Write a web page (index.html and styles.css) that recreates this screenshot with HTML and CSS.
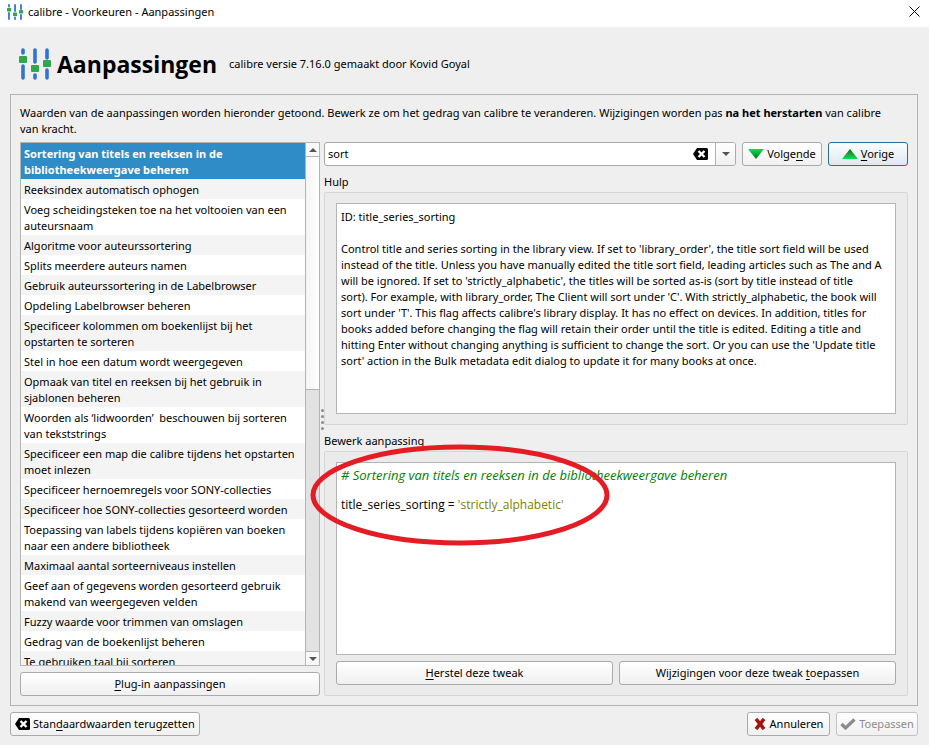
FILE: index.html
```html
<!DOCTYPE html>
<html lang="nl">
<head>
    <meta charset="UTF-8">
    <meta name="viewport" content="width=device-width, initial-scale=1.0">
    <title>calibre - Voorkeuren - Aanpassingen</title>
    <link rel="stylesheet" href="styles.css">
</head>
<body>
    <svg class="defs" width="0" height="0">
        <symbol id="sliders" viewBox="0 0 32 32">
            <path d="M4 2v3M4 18v12M16 2v12M16 27v3M28 2v8M28 22v8" stroke="#3273cd" stroke-width="3.600" stroke-linecap="round"/>
            <rect x="0" y="8" width="8" height="7" rx="1" fill="#2fa84a"/>
            <rect x="12" y="17" width="8" height="7" rx="1" fill="#2fa84a"/>
            <rect x="24" y="12" width="8" height="7" rx="1" fill="#2fa84a"/>
        </symbol>
        <symbol id="clear" viewBox="0 0 15 12">
            <path d="M4 0h9.500a1.500 1.500 0 0 1 1.500 1.500v9a1.500 1.500 0 0 1-1.500 1.500H4L0 6z" fill="#000"/>
            <path d="M5.500 3l6 6M11.500 3l-6 6" stroke="#fff" stroke-width="2.400"/>
        </symbol>
    </svg>

    <div class="titlebar">
        <svg class="titlebar-icon" viewBox="0 0 32 32"><use href="#sliders" width="32" height="32"/></svg>
        <span class="titlebar-text">calibre - Voorkeuren - Aanpassingen</span>
        <button class="close" type="button" aria-label="Sluiten">
            <svg width="11" height="11" viewBox="0 0 11 11"><path d="M.5.500l10 10M10.500.500l-10 10" stroke="#000" fill="none"/></svg>
        </button>
    </div>

    <header class="header">
        <svg class="header-icon" viewBox="0 0 32 32"><use href="#sliders" width="32" height="32"/></svg>
        <h1>Aanpassingen</h1>
        <span>calibre versie 7.16.0 gemaakt door Kovid Goyal</span>
    </header>

    <main class="frame">
        <p class="intro">Waarden van de aanpassingen worden hieronder getoond. Bewerk ze om het gedrag van calibre te veranderen. Wijzigingen worden pas <b>na het herstarten</b> van calibre<br>van kracht.</p>

        <div class="panes">
            <section class="left">
                <div class="list-box">
                    <ul class="list">
                        <li class="selected">Sortering van titels en reeksen in de<br>bibliotheekweergave beheren</li>
                        <li>Reeksindex automatisch ophogen</li>
                        <li>Voeg scheidingsteken toe na het voltooien van een<br>auteursnaam</li>
                        <li>Algoritme voor auteurssortering</li>
                        <li>Splits meerdere auteurs namen</li>
                        <li>Gebruik auteurssortering in de Labelbrowser</li>
                        <li>Opdeling Labelbrowser beheren</li>
                        <li>Specificeer kolommen om boekenlijst bij het<br>opstarten te sorteren</li>
                        <li>Stel in hoe een datum wordt weergegeven</li>
                        <li>Opmaak van titel en reeksen bij het gebruik in<br>sjablonen beheren</li>
                        <li>Woorden als ‘lidwoorden’&nbsp; beschouwen bij sorteren<br>van tekststrings</li>
                        <li>Specificeer een map die calibre tijdens het opstarten<br>moet inlezen</li>
                        <li>Specificeer hernoemregels voor SONY-collecties</li>
                        <li>Specificeer hoe SONY-collecties gesorteerd worden</li>
                        <li>Toepassing van labels tijdens kopiëren van boeken<br>naar een andere bibliotheek</li>
                        <li>Maximaal aantal sorteerniveaus instellen</li>
                        <li>Geef aan of gegevens worden gesorteerd gebruik<br>makend van weergegeven velden</li>
                        <li>Fuzzy waarde voor trimmen van omslagen</li>
                        <li>Gedrag van de boekenlijst beheren</li>
                        <li>Te gebruiken taal bij sorteren</li>
                    </ul>
                    <div class="scrollbar">
                        <button class="scroll-button" type="button" aria-label="Omhoog"><svg width="8" height="4" viewBox="0 0 8 4"><path d="M4 0l4 4H0z" fill="#555"/></svg></button>
                        <div class="thumb"></div>
                        <div class="track"></div>
                        <button class="scroll-button" type="button" aria-label="Omlaag"><svg width="8" height="4" viewBox="0 0 8 4"><path d="M0 0h8L4 4z" fill="#555"/></svg></button>
                    </div>
                </div>
                <button class="button" type="button"><span><u>P</u>lug-in aanpassingen</span></button>
            </section>

            <div class="splitter"><i></i><i></i><i></i><i></i></div>

            <section class="right">
                <form class="search-row">
                    <div class="search">
                        <input type="text" value="sort" aria-label="Zoeken">
                        <button class="search-clear" type="button" aria-label="Wissen"><svg width="15" height="12"><use href="#clear"/></svg></button>
                        <button class="search-drop" type="button" aria-label="Geschiedenis"><svg width="8" height="4" viewBox="0 0 8 4"><path d="M0 0h8L4 4z" fill="#555"/></svg></button>
                    </div>
                    <button class="button next" type="button">
                        <svg width="16" height="10" viewBox="0 0 16 10">
                            <linearGradient id="down" x2="0" y2="1"><stop stop-color="#0ae052"/><stop offset="1" stop-color="#06701f"/></linearGradient>
                            <path d="M0 0h16L8 10z" fill="url(#down)"/>
                        </svg>
                        <span>Volge<u>n</u>de</span>
                    </button>
                    <button class="button previous" type="button">
                        <svg width="16" height="10" viewBox="0 0 16 10">
                            <linearGradient id="up" x2="0" y2="1"><stop stop-color="#06701f"/><stop offset="1" stop-color="#0ae052"/></linearGradient>
                            <path d="M8 0l8 10H0z" fill="url(#up)"/>
                        </svg>
                        <span><u>V</u>orige</span>
                    </button>
                </form>

                <h2>Hulp</h2>
                <div class="group help-group">
                    <div class="text-box">
                        <p>ID: title_series_sorting</p>
                        <p>Control title and series sorting in the library view. If set to 'library_order', the title sort field will be used<br>instead of the title. Unless you have manually edited the title sort field, leading articles such as The and A<br>will be ignored. If set to 'strictly_alphabetic', the titles will be sorted as-is (sort by title instead of title<br>sort). For example, with library_order, The Client will sort under 'C'. With strictly_alphabetic, the book will<br>sort under 'T'. This flag affects calibre's library display. It has no effect on devices. In addition, titles for<br>books added before changing the flag will retain their order until the title is edited. Editing a title and<br>hitting Enter without changing anything is sufficient to change the sort. Or you can use the 'Update title<br>sort' action in the Bulk metadata edit dialog to update it for many books at once.</p>
                    </div>
                </div>

                <h2>Bewerk aanpassing</h2>
                <div class="group edit-group">
                    <div class="text-box code" contenteditable="true" role="textbox" aria-multiline="true" aria-label="Bewerk aanpassing" spellcheck="false">
                        <p class="comment"># Sortering van titels en reeksen in de bibliotheekweergave beheren</p>
                        <p>title_series_sorting = <span class="string">'strictly_alphabetic'</span></p>
                    </div>
                    <div class="button-row">
                        <button class="button" type="button"><span><u>H</u>erstel deze tweak</span></button>
                        <button class="button" type="button"><span>Wijzigingen voor deze tweak <u>t</u>oepassen</span></button>
                    </div>
                    <svg class="marker" width="300" height="102" viewBox="0 0 300 102">
                        <ellipse cx="150" cy="51" rx="147" ry="48" fill="none" stroke="#e51c24" stroke-width="5"/>
                    </svg>
                </div>
            </section>
        </div>
    </main>

    <footer class="footer">
        <button class="button reset" type="button"><svg width="15" height="12"><use href="#clear"/></svg><span>Stan<u>d</u>aardwaarden terugzetten</span></button>
        <button class="button cancel" type="button"><svg width="12" height="12" viewBox="0 0 12 12"><path d="M2 1l8 10M10 1L2 11" stroke="#a51212" stroke-width="3.600"/></svg><span>Annuleren</span></button>
        <button class="button apply" type="button" disabled><svg width="16" height="12" viewBox="0 0 16 12"><path d="M1.500 6l4 4 9-8.500" stroke="#8c8c8c" stroke-width="3.200" fill="none"/></svg><span>Toepassen</span></button>
    </footer>
</body>
</html>
```
FILE: styles.css
```css
* {
    box-sizing: border-box;
}
body {
    display: flex;
    flex-direction: column;
    min-height: 100vh;
    margin: 0;
    background: #efefef;
    color: #000;
    font: 11px/16px "Noto Sans", "Open Sans", sans-serif;
    white-space: nowrap;
}
h1, h2, p, ul {
    margin: 0;
    padding: 0;
}
button, input {
    font: inherit;
    color: inherit;
}
button svg {
    flex: none;
}
u {
    text-underline-offset: 2px;
}
.defs {
    position: absolute;
}

.titlebar {
    display: flex;
    align-items: center;
    height: 27px;
    padding: 0 9px 4px 7px;
    background: #fff;
}
.titlebar-icon {
    width: 16px;
    height: 16px;
    margin-right: 5px;
}
.close {
    display: flex;
    margin-left: auto;
    padding: 0;
    border: 0;
    background: none;
}

.header {
    display: flex;
    align-items: center;
    height: 67px;
    padding: 6px 19px 0;
}
.header-icon {
    width: 32px;
    height: 36px;
    margin-right: 6px;
}
h1 {
    margin-right: 12px;
    font-family: "Open Sans", "Noto Sans", sans-serif;
    font-size: 23px;
    line-height: 32px;
}

.frame {
    display: flex;
    flex: 1;
    flex-direction: column;
    margin: 0 11px 0 10px;
    padding: 10px 9px 9px;
    border: 1px solid #b4b4b4;
}
.intro {
    margin-bottom: 5px;
}
.panes {
    display: flex;
    flex: 1;
}
.left {
    display: flex;
    flex: none;
    flex-direction: column;
    gap: 6px;
    width: 300px;
}
.list-box {
    display: flex;
    flex: 1 0 0;
    min-height: 0;
    border: 1px solid #b4b4b4;
    background: #fff;
    overflow: hidden;
}
.list {
    flex: 1;
    min-width: 0;
    height: 0;
    list-style: none;
}
.list li {
    padding: 3px 3px 1px;
}
.list li:nth-child(even) {
    background: #f4f4f4;
}
.list .selected {
    background: #308cc6;
    color: #fff;
    font-weight: bold;
}
.scrollbar {
    display: flex;
    flex: none;
    flex-direction: column;
    width: 14px;
    border-left: 1px solid #b4b4b4;
}
.scroll-button {
    display: flex;
    align-items: center;
    justify-content: center;
    height: 13px;
    padding: 0;
    border: 0;
    background: #f8f8f8;
}
.thumb {
    flex: 47;
    border: solid #b4b4b4;
    border-width: 1px 0;
    background: linear-gradient(to right, #f4f4f4, #fff);
}
.track {
    flex: 53;
    border-bottom: 1px solid #b4b4b4;
    background: #e2e2e2;
}

.splitter {
    display: flex;
    flex: none;
    flex-direction: column;
    align-items: center;
    justify-content: center;
    gap: 3px;
    width: 4px;
}
.splitter i {
    width: 3px;
    height: 3px;
    border-radius: 50%;
    background: #8c8c8c;
}

.right {
    display: flex;
    flex: 1;
    flex-direction: column;
    min-width: 0;
}
.search-row {
    display: flex;
    gap: 6px;
}
.search {
    display: flex;
    flex: 1;
    height: 24px;
    border: 1px solid #aaa;
    border-radius: 3px;
    background: #fff;
}
.search input {
    flex: 1;
    min-width: 0;
    padding: 0 3px;
    border: 0;
    background: none;
    outline: 0;
}
.search button {
    display: flex;
    align-items: center;
    justify-content: center;
    padding: 0;
    border: 0;
    background: none;
}
.search .search-clear {
    width: 30px;
}
.search .search-drop {
    width: 20px;
    border-left: 1px solid #b4b4b4;
    border-radius: 0 2px 2px 0;
    background: linear-gradient(#fff, #f0f0f0);
}

.button {
    display: flex;
    align-items: center;
    justify-content: center;
    gap: 3px;
    height: 24px;
    padding: 0 4px;
    border: 1px solid #aaa;
    border-radius: 3px;
    background: linear-gradient(#fff, #f0f0f0);
}
.next, .previous {
    width: 80px;
}
.previous {
    border-color: #2f6d90;
    background: linear-gradient(#fcfeff, #dfe8ee);
}

h2 {
    font-size: 11px;
    font-weight: normal;
    line-height: 16px;
}
.search-row + h2 {
    margin-top: 8px;
}
.group {
    position: relative;
    display: flex;
    flex-direction: column;
    gap: 6px;
    margin-top: 2px;
    padding: 10px 11px;
    border: 1px solid #d6d6d6;
    border-radius: 2px;
    background: #ebebeb;
}
.help-group {
    flex: 232 0 0;
    margin-bottom: 8px;
}
.edit-group {
    flex: 245 0 0;
}
.text-box {
    flex: 1;
    padding: 5px 4px;
    border: 1px solid #b4b4b4;
    background: #fff;
    overflow: hidden;
}
.text-box p + p {
    margin-top: 16px;
}
.code {
    padding: 4px;
    font-family: "Open Sans", "Noto Sans", sans-serif;
    font-size: 12px;
    outline: 0;
}
.code p + p {
    margin-top: 14px;
}
.comment {
    color: #008000;
    font-size: 13px;
    font-style: italic;
}
.string {
    color: #808000;
}
.button-row {
    display: grid;
    grid-template-columns: 1fr 1fr;
    gap: 6px;
}
/* red ring drawn over the edited value */
.marker {
    position: absolute;
    top: -8px;
    left: -15px;
    pointer-events: none;
}

.footer {
    display: flex;
    gap: 6px;
    padding: 6px 11px 9px 10px;
}
.reset {
    margin-right: auto;
}
.cancel {
    width: 83px;
    gap: 4px;
}
.apply {
    width: 82px;
    border-color: #c4c4c4;
    color: #8c8c8c;
}
```
